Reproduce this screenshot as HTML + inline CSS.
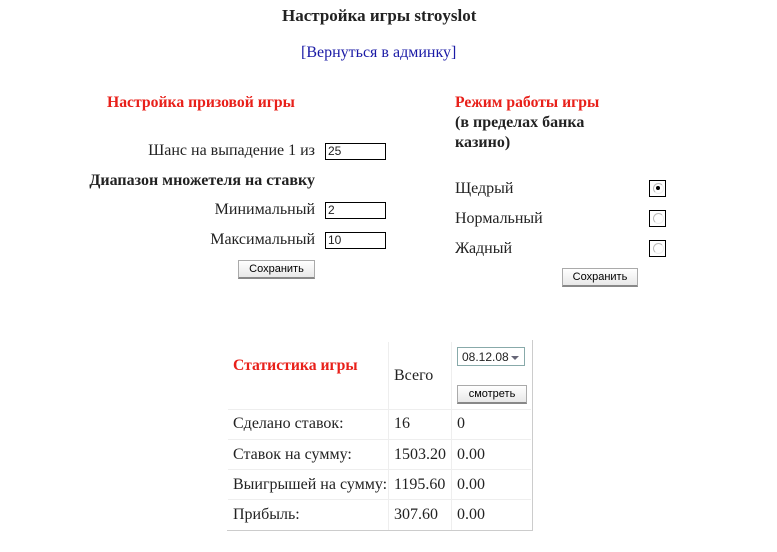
<!DOCTYPE html>
<html><head><meta charset="utf-8"><style>
body{margin:0;width:777px;height:552px;background:#fff;font-family:"Liberation Serif",serif;color:#222;position:relative;overflow:hidden}
.a{position:absolute;white-space:nowrap}
.t{font-size:16px}
.b{font-weight:bold}
.r{color:#e8201a;font-weight:bold;font-size:15.7px}
.rt{position:absolute;white-space:nowrap;right:462px;font-size:16px}
.in{position:absolute;width:57px;height:15px;border:1px solid #000;font:12px "Liberation Sans",sans-serif;line-height:15px;padding-left:2px;box-sizing:content-box}
.btn{position:absolute;height:16px;border:1px solid #aaa;border-bottom:2px solid #888;background:linear-gradient(#fff,#e8e8e8);font:11px "Liberation Sans",sans-serif;text-align:center;line-height:16px;color:#000}
.rad{position:absolute;width:17px;height:17px;border:1px solid #000;box-sizing:border-box}
.rad i{position:absolute;left:3px;top:2px;width:9px;height:9px;border-radius:50%;border:1px solid #bbb;border-right-color:#eee;border-bottom-color:#eee}
.hl{position:absolute;background:#eee}
</style></head><body>
<div class="a b" style="left:282px;top:6px;font-size:17px">Настройка игры stroyslot</div>
<div class="a t" style="left:301px;top:44px;color:#1a1aa6;font-size:16px">[Вернуться в админку]</div>

<div class="a r" style="left:107px;top:94px">Настройка призовой игры</div>
<div class="rt" style="top:142px">Шанс на выпадение 1 из</div>
<div class="in" style="left:325px;top:143px">25</div>
<div class="rt b" style="top:172px">Диапазон множетеля на ставку</div>
<div class="rt" style="top:201px">Минимальный</div>
<div class="in" style="left:325px;top:202px">2</div>
<div class="rt" style="top:231px">Максимальный</div>
<div class="in" style="left:325px;top:232px">10</div>
<div class="btn" style="left:238px;top:260px;width:75px">Сохранить</div>

<div class="a r" style="left:455px;top:94px">Режим работы игры</div>
<div class="a t b" style="left:455px;top:113px;line-height:20px">(в пределах банка<br>казино)</div>
<div class="a t" style="left:455px;top:180px">Щедрый</div>
<div class="a t" style="left:455px;top:210px">Нормальный</div>
<div class="a t" style="left:455px;top:240px">Жадный</div>
<div class="rad" style="left:649px;top:180px"><i></i><b style="position:absolute;left:6px;top:5px;width:4px;height:4px;background:#000;border-radius:50%"></b></div>
<div class="rad" style="left:649px;top:210px"><i></i></div>
<div class="rad" style="left:649px;top:240px"><i></i></div>
<div class="btn" style="left:562px;top:268px;width:74px">Сохранить</div>

<div style="position:absolute;left:227px;top:340px;width:305px;height:190px;border-right:1px solid #ccc;border-bottom:1px solid #ccc"></div>
<div class="hl" style="left:388px;top:342px;width:1px;height:188px"></div>
<div class="hl" style="left:451px;top:342px;width:1px;height:188px"></div>
<div class="hl" style="left:228px;top:409px;width:303px;height:1px"></div>
<div class="hl" style="left:228px;top:439px;width:303px;height:1px"></div>
<div class="hl" style="left:228px;top:469px;width:303px;height:1px"></div>
<div class="hl" style="left:228px;top:499px;width:303px;height:1px"></div>
<div class="a r" style="left:233px;top:357px">Статистика игры</div>
<div class="a t" style="left:394px;top:367px">Всего</div>
<div style="position:absolute;left:457px;top:347px;width:68px;height:19px;border:1px solid #8aa;font:12px 'Liberation Sans',sans-serif;line-height:18px;box-sizing:border-box;padding-left:4px">08.12.08<span style="position:absolute;right:5px;top:8px;border:4px solid transparent;border-top:4px solid #667;border-bottom:0"></span></div>
<div class="btn" style="left:457px;top:385px;width:68px">смотреть</div>
<div class="a t" style="left:233px;top:415px">Сделано ставок:</div>
<div class="a t" style="left:394px;top:415px">16</div>
<div class="a t" style="left:457px;top:415px">0</div>
<div class="a t" style="left:233px;top:446px">Ставок на сумму:</div>
<div class="a t" style="left:394px;top:446px">1503.20</div>
<div class="a t" style="left:457px;top:446px">0.00</div>
<div class="a t" style="left:233px;top:476px">Выигрышей на сумму:</div>
<div class="a t" style="left:394px;top:476px">1195.60</div>
<div class="a t" style="left:457px;top:476px">0.00</div>
<div class="a t" style="left:233px;top:506px">Прибыль:</div>
<div class="a t" style="left:394px;top:506px">307.60</div>
<div class="a t" style="left:457px;top:506px">0.00</div>
</body></html>
